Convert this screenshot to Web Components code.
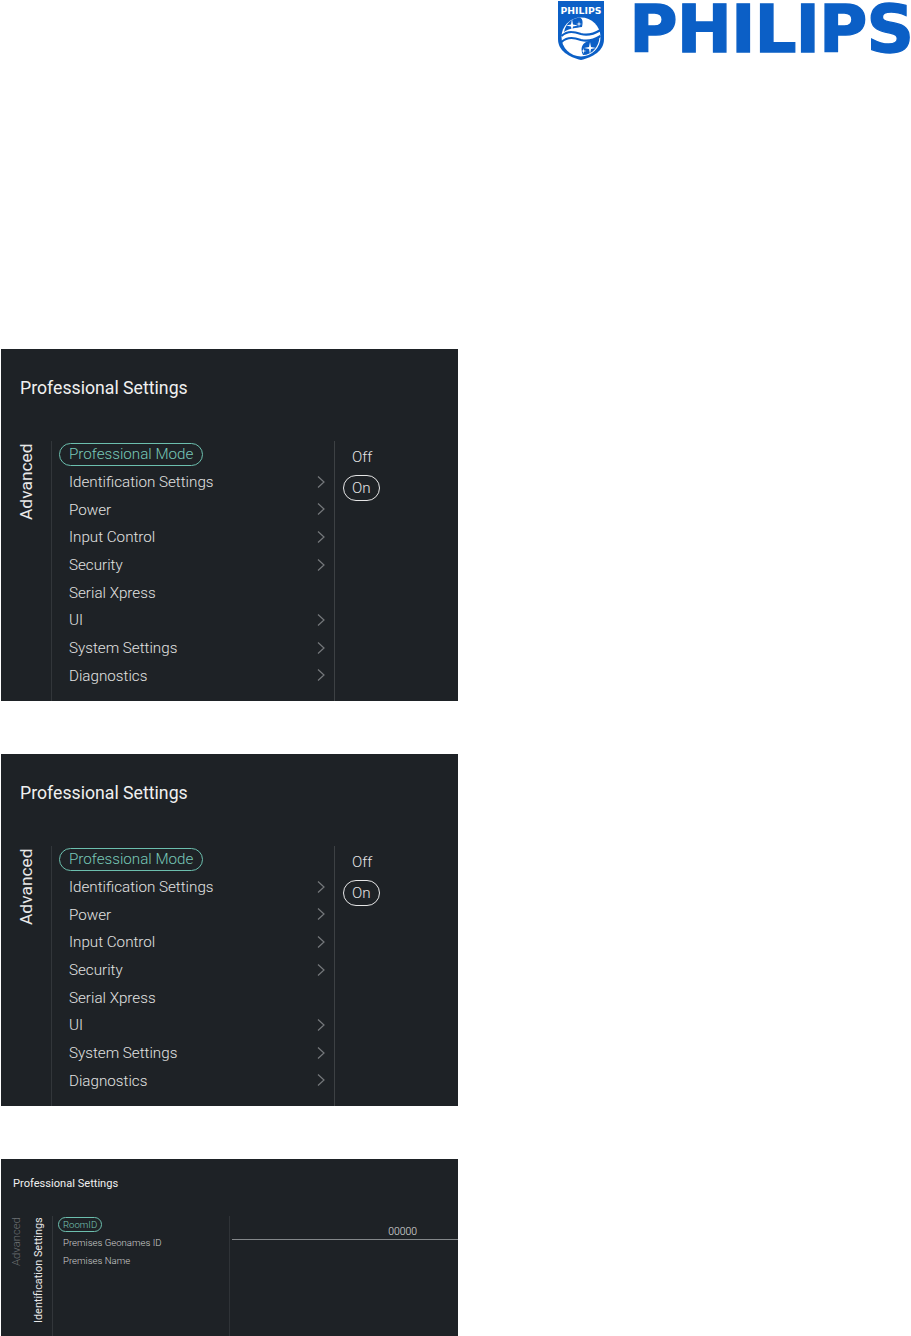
<!DOCTYPE html>
<html lang="en">
<head>
<meta charset="utf-8">
<title>Professional Settings</title>
<style>
html,body{margin:0;padding:0;background:#fff;}
body{height:1336px;overflow:hidden;font-family:Roboto,"Liberation Sans",sans-serif;}
page-stack{display:flex;flex-direction:column;gap:53px;height:987px;overflow:hidden;}
</style>
</head>
<body>
<philips-header></philips-header>
<page-stack>
  <settings-panel heading="Professional Settings" side="Advanced">
    <menu-item selected>Professional Mode</menu-item>
    <menu-item chevron>Identification Settings</menu-item>
    <menu-item chevron>Power</menu-item>
    <menu-item chevron>Input Control</menu-item>
    <menu-item chevron>Security</menu-item>
    <menu-item>Serial Xpress</menu-item>
    <menu-item chevron>UI</menu-item>
    <menu-item chevron>System Settings</menu-item>
    <menu-item chevron>Diagnostics</menu-item>
    <value-options slot="value"><span>Off</span><span class="on">On</span></value-options>
  </settings-panel>
  <settings-panel heading="Professional Settings" side="Advanced">
    <menu-item selected>Professional Mode</menu-item>
    <menu-item chevron>Identification Settings</menu-item>
    <menu-item chevron>Power</menu-item>
    <menu-item chevron>Input Control</menu-item>
    <menu-item chevron>Security</menu-item>
    <menu-item>Serial Xpress</menu-item>
    <menu-item chevron>UI</menu-item>
    <menu-item chevron>System Settings</menu-item>
    <menu-item chevron>Diagnostics</menu-item>
    <value-options slot="value"><span>Off</span><span class="on">On</span></value-options>
  </settings-panel>
  <settings-panel compact heading="Professional Settings" side="Advanced" side2="Identification Settings">
    <menu-item compact selected>RoomID</menu-item>
    <menu-item compact>Premises Geonames ID</menu-item>
    <menu-item compact>Premises Name</menu-item>
    <value-field slot="value">00000</value-field>
  </settings-panel>
</page-stack>
<script>
function def(name, css, html, extra){
  customElements.define(name, class extends HTMLElement{
    constructor(){
      super();
      const r=this.attachShadow({mode:'open'});
      r.innerHTML='<style>'+css+'</style>'+html;
    }
    connectedCallback(){ if(extra) extra(this,this.shadowRoot); }
  });
}
def('philips-header',`
  :host{display:flex;justify-content:flex-end;align-items:flex-start;height:349px;gap:25px;}
  svg{display:block;margin-top:1px;flex:none;}
  .word{font:700 66px/48px "DejaVu Sans",sans-serif;color:#0b5fc6;-webkit-text-stroke:1.3px #0b5fc6;letter-spacing:-1px;margin:6px -2px 0 0;white-space:nowrap;flex:none;}
`,`
  <svg width="46" height="59" viewBox="0 0 46 59">
    <path fill="#0b5fc6" d="M0 0H46V38C46 50 35 56 23 59C11 56 0 50 0 38Z"/>
    <circle cx="23" cy="36" r="19.5" fill="#fff"/>
    <path fill="#0b5fc6" d="M6 31C8 22 14 17 22 16.500C25 18 25 22 24 26C18 27 11 27 6 31Z"/>
    <path fill="#0b5fc6" d="M41.500 36C38 39 33 39 28 41C24 43 22 48 25 54C34 54 41 46 41.500 36Z"/>
    <g fill="none" stroke="#0b5fc6" stroke-width="2.200">
      <path d="M3.500 35C10 29 17 31 23 33C30 35 36 33 42.500 29"/>
      <path d="M3.500 41C10 35 17 37 23 39C30 41 36 39 42.500 35"/>
    </g>
    <g fill="#fff">
      <path d="M14 18L15 23.500L20 24.500L15 25.500L14 31L13 25.500L8 24.500L13 23.500Z"/>
      <path d="M21 20L21.500 22.500L24 23L21.500 23.500L21 26L20.500 23.500L18 23L20.500 22.500Z"/>
      <path d="M32 41L33 46L38 47L33 48L32 53L31 48L26 47L31 46Z"/>
      <path d="M25.500 47L26 49.500L28.500 50L26 50.500L25.500 53L25 50.500L22.500 50L25 49.500Z"/>
    </g>
    <text x="23" y="13" text-anchor="middle" textLength="41" lengthAdjust="spacingAndGlyphs" font-family="'DejaVu Sans',sans-serif" font-weight="700" font-size="8.500" fill="#fff">PHILIPS</text>
  </svg>
  <div class="word">PHILIPS</div>
`);
def('settings-panel',`
  :host{display:block;flex:none;margin-left:1px;width:457px;height:352px;background:#1e2226;color:#eee;overflow:hidden;font-family:Roboto,"Liberation Sans",sans-serif;font-weight:300;}
  :host([compact]){height:177px;}
  .title{height:24px;padding:27px 0 0 19px;margin-bottom:41px;font-size:17.7px;line-height:24px;font-weight:400;color:#f0f0f0;}
  .body{display:flex;height:260px;}
  .side{width:50px;flex:none;display:flex;flex-direction:row;justify-content:center;box-sizing:border-box;}
  .v{writing-mode:vertical-rl;transform:rotate(180deg);white-space:nowrap;font-size:17.4px;line-height:50px;text-align:right;font-weight:400;color:#e8e8e8;height:78px;margin-top:2px;}
  .menu{flex:none;border-left:1px solid #32363a;padding-left:7px;width:275px;}
  .val{flex:1;border-left:1px solid #3d4144;}
  :host([compact]) .title{font-size:11.1px;line-height:14px;height:14px;padding:18px 0 0 12px;margin-bottom:25px;}
  :host([compact]) .body{height:120px;}
  :host([compact]) .side{width:51px;justify-content:flex-start;padding-left:5px;}
  :host([compact]) .v{font-size:10.9px;line-height:22px;height:107px;margin-top:1px;}
  :host([compact]) .v.dim{color:#6b6f72;font-weight:300;font-size:11.3px;}
  :host([compact]) .menu{width:169px;padding:0 2px 0 5px;}
  :host([compact]) .val{border-left-color:#2f3337;}
`,`
  <div class="title" id="t"></div>
  <div class="body">
    <div class="side" id="s"></div>
    <div class="menu"><slot></slot></div>
    <div class="val"><slot name="value"></slot></div>
  </div>
`,(el,r)=>{
  r.getElementById('t').textContent=el.getAttribute('heading');
  const s=r.getElementById('s');
  s.innerHTML='';
  const a=document.createElement('div');a.className='v'+(el.hasAttribute('side2')?' dim':'');a.textContent=el.getAttribute('side');s.append(a);
  if(el.hasAttribute('side2')){const b=document.createElement('div');b.className='v';b.textContent=el.getAttribute('side2');s.append(b);}
});
def('menu-item',`
  :host{display:flex;align-items:center;justify-content:space-between;height:27.7px;font-size:15.2px;color:#e2e2e2;}
  .t{display:block;box-sizing:border-box;height:23px;line-height:21px;padding:0 9px;border:1px solid transparent;border-radius:12px;white-space:nowrap;}
  :host([selected]) .t{border-color:#6cbfae;color:#78c8b8;}
  svg{display:none;margin:0 9px 2px 0;flex:none;}
  :host([chevron]) svg{display:block;}
  :host([compact]){height:18px;font-size:9.6px;color:#cfcfcf;position:relative;top:-1px;}
  :host([compact]) .t{height:15px;line-height:13px;padding:0 4px;}
`,`<span class="t"><slot></slot></span>
  <svg width="8" height="12" viewBox="0 0 8 12"><path d="M1 .5L7 6L1 11.500" fill="none" stroke="#75787b" stroke-width="1.200"/></svg>`);
def('value-options',`
  :host{display:flex;flex-direction:column;align-items:flex-start;padding:3px 0 0 8px;font-size:15.2px;color:#e6e6e6;}
  ::slotted(span){display:block;box-sizing:border-box;height:26px;line-height:24px;padding:0 8px;border:1px solid transparent;border-radius:13px;margin-bottom:5px;}
  ::slotted(.on){border-color:#e6e6e6;}
`,`<slot></slot>`);
def('value-field',`
  :host{display:block;box-sizing:border-box;margin:8px 0 0 2px;height:16px;border-bottom:1px solid #83878a;padding-right:41px;text-align:right;font-size:10.4px;line-height:15px;color:#e0e0e0;font-weight:300;}
`,`<slot></slot>`);
</script>
</body>
</html>
